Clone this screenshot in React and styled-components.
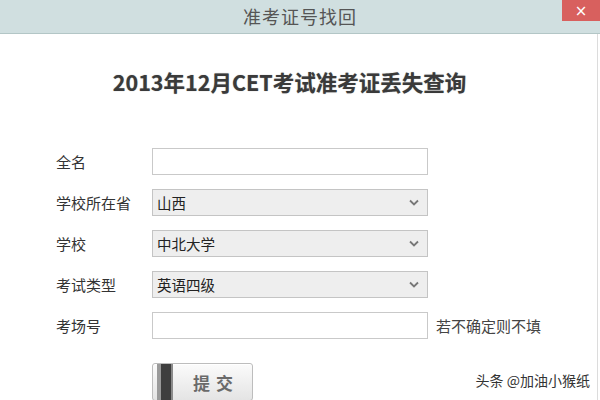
import React from "react";
import styled, { createGlobalStyle } from "styled-components";

const GlobalStyle = createGlobalStyle`
  html, body {
    margin: 0;
    padding: 0;
    background: #fff;
  }
  body {
    width: 600px;
    height: 400px;
    overflow: hidden;
    font-family: "Noto Sans CJK SC", "Noto Sans", sans-serif;
  }
`;

const Window = styled.div`
  position: relative;
  width: 600px;
  height: 400px;
  display: flex;
  flex-direction: column;
  overflow: hidden;
`;

const TitleBar = styled.div`
  height: 33px;
  flex: none;
  background: #d0dfe0;
  border-bottom: 1px solid #b3c6c6;
  display: grid;
  grid-template-columns: 1fr auto 1fr;
  align-items: start;
`;

const Title = styled.div`
  grid-column: 2;
  line-height: 32px;
  font-size: 18px;
  letter-spacing: 1px;
  color: #555;
`;

const CloseBtn = styled.div`
  grid-column: 3;
  justify-self: end;
  width: 38px;
  height: 21px;
  background: #d8605e;
  color: #fff;
  font-size: 15px;
  font-family: "DejaVu Sans", sans-serif;
  display: flex;
  align-items: center;
  justify-content: center;
`;

const Body = styled.div`
  flex: 1;
  border-right: 1px solid #dcdcdc;
  margin-right: 2px;
  display: flex;
  flex-direction: column;
`;

const Heading = styled.h1`
  margin: 34px 0 0;
  padding-right: 18px;
  text-align: center;
  font-size: 21.5px;
  line-height: 28px;
  font-weight: bold;
  color: #3a3a3a;
  text-shadow: 0 0 1px #999;
`;

const Form = styled.div`
  margin-top: 52px;
  padding-left: 56px;
  display: flex;
  flex-direction: column;
  gap: 14px;
`;

const Row = styled.div`
  display: grid;
  grid-template-columns: 96px 276px auto;
  align-items: center;
  height: 27px;
`;

const Label = styled.span`
  font-size: 15px;
  color: #333;
`;

const TextInput = styled.div`
  box-sizing: border-box;
  height: 27px;
  border: 1px solid #c9c9c9;
  background: #fff;
`;

const SelectBox = styled.div`
  box-sizing: border-box;
  height: 27px;
  border: 1px solid #c4c4c4;
  background: #eeeeee;
  display: flex;
  align-items: center;
  justify-content: space-between;
  padding: 0 8px 0 4px;
  font-size: 14.5px;
  color: #222;
`;

const Hint = styled.span`
  margin-left: 8px;
  font-size: 15px;
  color: #444;
`;

const SubmitBtn = styled.div`
  margin: 24px 0 0 152px;
  width: 101px;
  height: 38px;
  box-sizing: border-box;
  border: 1px solid #bdbdbd;
  border-radius: 3px;
  background: linear-gradient(#fbfbfb, #e4e4e4);
  display: flex;
  align-items: center;
  padding-left: 4px;
  box-shadow: inset 0 1px 0 #fff;
`;

const Grip = styled.div`
  width: 16px;
  height: 100%;
  background: linear-gradient(90deg, #9a9a9a 0 4px, #3e3e3e 4px 14px, #8a8a8a 14px);
`;

const BtnText = styled.span`
  margin-left: 20px;
  font-size: 17px;
  letter-spacing: 6px;
  color: #6a6a6a;
  font-weight: bold;
`;

const Watermark = styled.div`
  position: absolute;
  right: 10px;
  bottom: 10px;
  font-size: 14px;
  color: #333;
  background: #fff;
`;

const Chevron = () => (
  <svg width="10" height="7" viewBox="0 0 10 7">
    <path d="M1 1.5 L5 5.5 L9 1.5" fill="none" stroke="#777" strokeWidth="1.8" />
  </svg>
);

const Select = ({ value }) => (
  <SelectBox>
    <span>{value}</span>
    <Chevron />
  </SelectBox>
);

const App = () => (
  <>
    <GlobalStyle />
    <Window>
      <TitleBar>
        <Title>准考证号找回</Title>
        <CloseBtn>×</CloseBtn>
      </TitleBar>
      <Body>
        <Heading>2013年12月CET考试准考证丢失查询</Heading>
        <Form>
          <Row>
            <Label>全名</Label>
            <TextInput />
          </Row>
          <Row>
            <Label>学校所在省</Label>
            <Select value="山西" />
          </Row>
          <Row>
            <Label>学校</Label>
            <Select value="中北大学" />
          </Row>
          <Row>
            <Label>考试类型</Label>
            <Select value="英语四级" />
          </Row>
          <Row>
            <Label>考场号</Label>
            <TextInput />
            <Hint>若不确定则不填</Hint>
          </Row>
        </Form>
        <SubmitBtn>
          <Grip />
          <BtnText>提交</BtnText>
        </SubmitBtn>
      </Body>
      <Watermark>头条 @加油小猴纸</Watermark>
    </Window>
  </>
);

export default App;
